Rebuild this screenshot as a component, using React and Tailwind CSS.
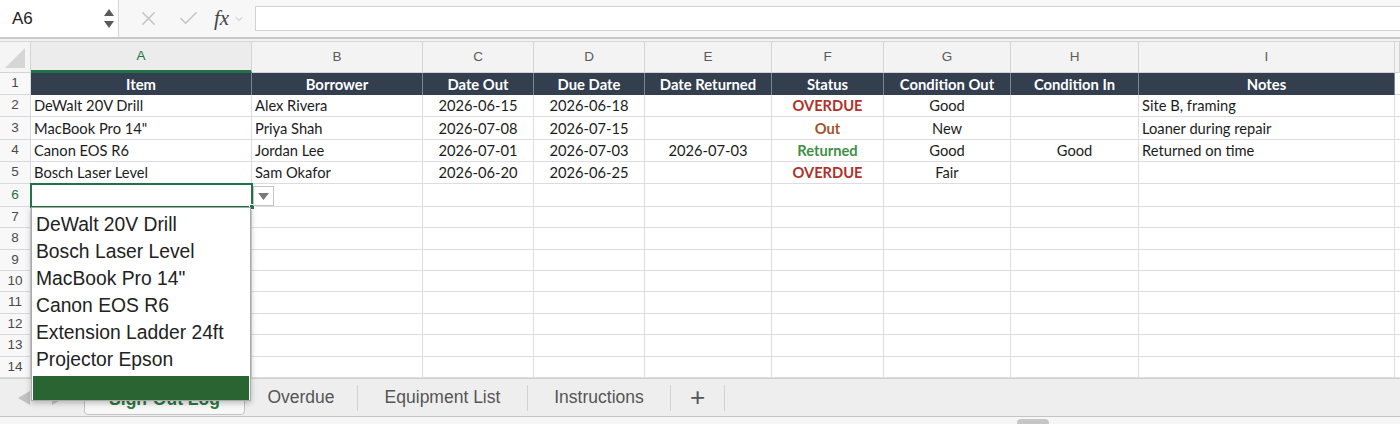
import React from 'react';
import { X, Check, ChevronDown } from 'lucide-react';

// column widths for the sheet grid (row-number column first)
const gridCols = 'grid grid-cols-[31px_221px_171px_111px_111px_127px_112px_127px_128px_256px_1fr]';

const letters = ['A', 'B', 'C', 'D', 'E', 'F', 'G', 'H', 'I', ''];

const headers = ['Item', 'Borrower', 'Date Out', 'Due Date', 'Date Returned', 'Status', 'Condition Out', 'Condition In', 'Notes', ''];

const data = [
  ['DeWalt 20V Drill', 'Alex Rivera', '2026-06-15', '2026-06-18', '', 'OVERDUE', 'Good', '', 'Site B, framing'],
  ['MacBook Pro 14"', 'Priya Shah', '2026-07-08', '2026-07-15', '', 'Out', 'New', '', 'Loaner during repair'],
  ['Canon EOS R6', 'Jordan Lee', '2026-07-01', '2026-07-03', '2026-07-03', 'Returned', 'Good', 'Good', 'Returned on time'],
  ['Bosch Laser Level', 'Sam Okafor', '2026-06-20', '2026-06-25', '', 'OVERDUE', 'Fair', '', ''],
];

const rowHeights = ['h-[22px]', 'h-[22px]', 'h-[23px]', 'h-[22px]', 'h-[22px]', 'h-[23px]', 'h-[21px]', 'h-[22px]', 'h-[21px]', 'h-[21px]', 'h-[22px]', 'h-[21px]', 'h-[22px]', 'h-[21px]'];

const statusColor = {
  OVERDUE: 'text-[#b0312a]',
  Out: 'text-[#a2532b]',
  Returned: 'text-[#3f8f45]',
};

const align = ['justify-start pl-[3px]', 'justify-start pl-[3px]', 'justify-center', 'justify-center', 'justify-center', 'justify-center', 'justify-center', 'justify-center', 'justify-start pl-[3px]', ''];

const listItems = ['DeWalt 20V Drill', 'Bosch Laser Level', 'MacBook Pro 14"', 'Canon EOS R6', 'Extension Ladder 24ft', 'Projector Epson'];

const FormulaBar = () => (
  <div className="flex h-[37px] bg-[#f7f7f7]">
    <div className="w-[119px] bg-white border-r border-[#d6d6d6] flex items-center justify-between pl-[12px] pr-[4px]">
      <span className="font-['Liberation_Sans',sans-serif] text-[17px] text-[#222]">A6</span>
      <div className="flex flex-col gap-[5px] items-center">
        <svg width="10" height="7" viewBox="0 0 10 7"><path d="M5 0 L10 7 L0 7 Z" fill="#5a5a5a" /></svg>
        <svg width="10" height="7" viewBox="0 0 10 7"><path d="M0 0 L10 0 L5 7 Z" fill="#5a5a5a" /></svg>
      </div>
    </div>
    <div className="w-[136px] flex items-center pl-[18px]">
      <X size={23} strokeWidth={1.6} className="text-[#c4c4c4]" />
      <Check size={23} strokeWidth={1.6} className="text-[#c4c4c4] ml-[17px]" />
      <span className="ml-[14px] font-['Liberation_Serif',serif] italic text-[21px] text-[#444] leading-none">fx</span>
      <ChevronDown size={12} strokeWidth={1.5} className="text-[#aaa] ml-[4px]" />
    </div>
    <div className="flex-1 my-[6px] bg-white border border-[#d2d2d2] border-r-0" />
  </div>
);

const ColumnHeaders = () => (
  <div className={`${gridCols} h-[31px] bg-[#f3f3f3] font-['Liberation_Sans',sans-serif] text-[13.5px] text-[#5a5a5a]`}>
    <div className="relative border-r border-b border-[#d4d4d4] bg-[#f5f5f5]">
      <svg className="absolute right-[5px] bottom-[4px]" width="20" height="20" viewBox="0 0 20 20">
        <path d="M20 0 L20 20 L0 20 Z" fill="#d6d6d6" />
      </svg>
    </div>
    {letters.map((l, i) => (
      <div
        key={i}
        className={
          i === 0
            ? 'flex items-center justify-center border-r border-[#d4d4d4] border-b-[3px] border-b-[#217346] bg-[#ececec] text-[#217346]'
            : 'flex items-center justify-center border-r border-b border-[#d4d4d4]'
        }
      >
        {l}
      </div>
    ))}
  </div>
);

const Sheet = () => (
  <div className="font-['Lato',sans-serif]">
    {rowHeights.map((h, r) => {
      const n = r + 1;
      const row = r === 0 ? headers : data[r - 1] || [];
      return (
        <div key={r} className={`${gridCols} ${h}`}>
          <div
            className={`flex items-center justify-center border-r border-b border-[#d8d8dc] bg-[#f8f8f8] font-['Liberation_Sans',sans-serif] text-[13.5px] ${
              n === 6 ? 'text-[#217346]' : 'text-[#4a4a4a]'
            }`}
          >
            {n}
          </div>
          {letters.map((_, c) => {
            const v = row[c] || '';
            if (r === 0) {
              return (
                <div
                  key={c}
                  className={
                    c === 9
                      ? 'border-b border-[#d8d8dc]'
                      : 'flex items-center justify-center bg-[#333e4f] border-r border-[#7d8594] text-white font-bold text-[14.8px]'
                  }
                >
                  {v}
                </div>
              );
            }
            return (
              <div
                key={c}
                className={`flex items-center ${align[c]} ${c === 9 ? 'border-b' : 'border-r border-b'} border-[#dcdce2] text-[14.7px] text-[#1c1c1c] whitespace-nowrap overflow-hidden ${
                  c === 5 ? `font-bold ${statusColor[v] || ''}` : ''
                }`}
              >
                {v}
              </div>
            );
          })}
        </div>
      );
    })}
  </div>
);

const SheetTabs = () => (
  <div className="h-[39px] bg-[#eeeeee] border-t border-[#d0d0d0] border-b border-b-[#c4c4c4] flex items-center font-['Liberation_Sans',sans-serif] text-[17.5px] text-[#555]">
    <div className="w-[84px] flex items-center gap-[22px] pl-[18px]">
      <svg width="12" height="14" viewBox="0 0 12 14"><path d="M0 7 L12 0 L12 14 Z" fill="#c2c2c2" /></svg>
      <svg width="12" height="14" viewBox="0 0 12 14"><path d="M12 7 L0 0 L0 14 Z" fill="#c2c2c2" /></svg>
    </div>
    <div className="w-[161px] h-[32px] self-start mt-[4px] bg-[#f8f8f8] border border-[#c2c2c2] rounded-b-[4px] flex items-center justify-center font-bold text-[#2d7a3e]">
      Sign-Out Log
    </div>
    <div className="w-[113px] h-[26px] flex items-center justify-center border-r border-[#d2d2d2]">Overdue</div>
    <div className="w-[170px] h-[26px] flex items-center justify-center border-r border-[#d2d2d2]">Equipment List</div>
    <div className="w-[143px] h-[26px] flex items-center justify-center border-r border-[#d2d2d2]">Instructions</div>
    <div className="w-[54px] h-[26px] flex items-center justify-center border-r border-[#d2d2d2] text-[26px] text-[#555] font-light">+</div>
  </div>
);

export default function App() {
  return (
    <div className="relative w-[1400px] h-[424px] overflow-hidden bg-white">
      <FormulaBar />
      <div className="h-[5px] border-t-2 border-[#c8c8c8] border-b border-b-[#d6d6d6] bg-[#f2f2f2]" />
      <ColumnHeaders />
      <Sheet />
      <SheetTabs />
      <div className="h-[7px] bg-[#f6f6f6] flex">
        <div className="ml-[1017px] mt-[2px] w-[32px] h-[8px] rounded-[4px] bg-[#c6c6c6]" />
      </div>

      {/* active cell A6 */}
      <div className="absolute left-[30px] top-[183px] w-[223px] h-[25px] border-2 border-[#217346]" />
      <div className="absolute left-[249px] top-[204px] w-[6px] h-[6px] bg-[#217346] border border-white" />

      {/* validation dropdown button */}
      <div className="absolute left-[253px] top-[186px] w-[21px] h-[20px] bg-white border border-[#c4c4c4] flex items-center justify-center">
        <svg width="11" height="7" viewBox="0 0 11 7"><path d="M0 0 L11 0 L5.5 7 Z" fill="#7a7a7a" /></svg>
      </div>

      {/* validation list */}
      <div className="absolute left-[31px] top-[207px] w-[220px] h-[194px] bg-white border border-[#a9a9a9] shadow-[0_2px_6px_rgba(0,0,0,0.25)] flex flex-col pt-[4px] font-['Liberation_Sans',sans-serif] text-[19.3px] text-[#222]">
        {listItems.map((t) => (
          <div key={t} className="h-[27px] flex items-center pl-[4px] whitespace-nowrap">
            {t}
          </div>
        ))}
        <div className="mx-[1px] mt-[2px] h-[26px] bg-[#2a6433]" />
      </div>
    </div>
  );
}
